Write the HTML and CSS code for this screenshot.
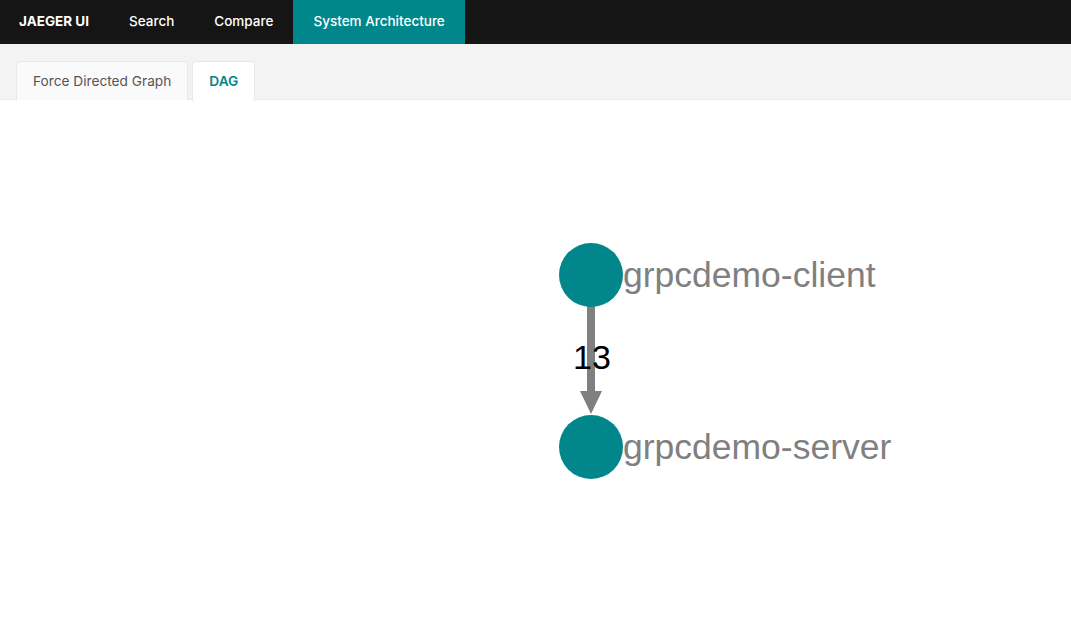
FILE: index.html
```html
<!DOCTYPE html>
<html>
<head>
<meta charset="utf-8">
<link rel="stylesheet" href="styles.css">
</head>
<body>
<header class="topnav">
  <a class="brand">JAEGER UI</a>
  <a class="navitem">Search</a>
  <a class="navitem">Compare</a>
  <a class="navitem active">System Architecture</a>
</header>
<div class="tabbar">
  <div class="tab">Force Directed Graph</div>
  <div class="tab active">DAG</div>
</div>
<main class="canvas">
  <svg class="graph" width="1071" height="535" viewBox="0 100 1071 535">
    <line x1="591" y1="300" x2="591" y2="394" stroke="#808080" stroke-width="8"/>
    <polygon points="580,391 602,391 591,414" fill="#808080"/>
    <circle cx="591" cy="275" r="32" fill="#00868b"/>
    <circle cx="591" cy="447" r="32" fill="#00868b"/>
    <text class="nlabel" x="623" y="287">grpcdemo-client</text>
    <text class="nlabel" x="623" y="459">grpcdemo-server</text>
    <text class="elabel" x="592" y="369" text-anchor="middle">13</text>
  </svg>
</main>
</body>
</html>
```
FILE: styles.css
```css
* { box-sizing: border-box; }
html, body { margin: 0; padding: 0; background: #fff; }
body { font-family: Inter, "Noto Sans", sans-serif; width: 1071px; height: 635px; overflow: hidden; }
.topnav { display: flex; height: 44px; background: #151515; align-items: stretch; }
.topnav a { display: flex; align-items: center; padding: 0 20px 2px; color: #fff; font-size: 13.5px; font-weight: 500; }
.topnav .brand { font-weight: 700; padding: 0 20px 2px 19px; }
.topnav .active { background: #00878b; }
.tabbar { display: flex; gap: 4px; background: #f3f3f3; padding: 17px 16px 0; border-bottom: 1px solid #e8e8e8; height: 56px; }
.tab { height: 39px; padding: 0 16px 1px; display: flex; align-items: center; font-size: 13.7px; color: #555; background: #fafafa; border: 1px solid #e8e8e8; border-bottom: none; border-radius: 4px 4px 0 0; margin-bottom: -1px; }
.tab.active { background: #fff; color: #00868b; font-weight: 600; height: 40px; }
.canvas { height: 535px; }
.graph { display: block; }
.nlabel { font-family: "Liberation Sans", Arial, sans-serif; font-size: 35.5px; fill: #808080; }
.elabel { font-family: "Liberation Sans", Arial, sans-serif; font-size: 34px; fill: #000; }
```
